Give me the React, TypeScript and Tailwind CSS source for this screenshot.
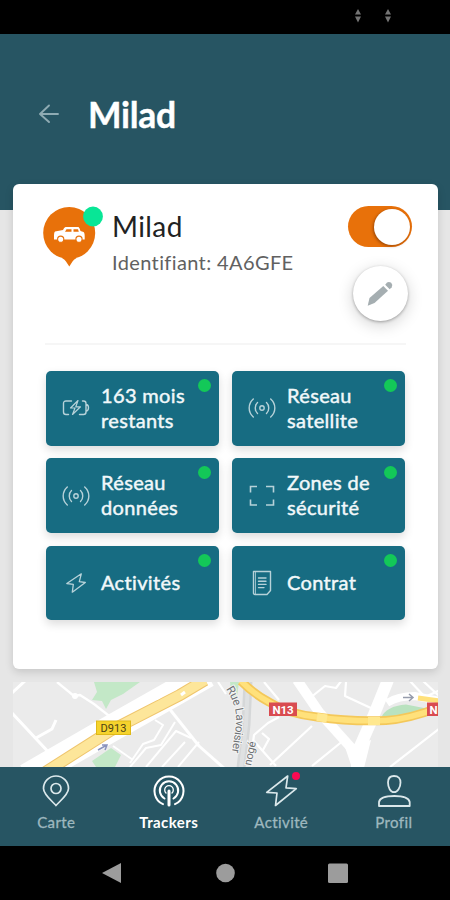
import React from "react";

type IconProps = { className?: string };

const line = {
  fill: "none",
  stroke: "currentColor",
  strokeLinecap: "round" as const,
  strokeLinejoin: "round" as const,
};

function BatteryIcon() {
  return (
    <svg width="28" height="20" viewBox="0 0 28 20" {...line} strokeWidth="1.400">
      <path d="M9.500 3H4Q1.500 3 1.500 5.500V14Q1.500 16.500 4 16.500H6.500M20.500 3H21.500Q24 3 24 5.500V14Q24 16.500 21.500 16.500H17.500M24.500 6.500Q26.500 7 26.500 9.800Q26.500 12.500 24.500 13" />
      <path d="M16 2.500L8.500 10H13L10.500 16.500L18.500 8.800H13.800Z" strokeWidth="1.200" />
    </svg>
  );
}

function SignalIcon() {
  return (
    <svg width="28" height="22" viewBox="0 0 28 22" {...line} strokeWidth="1.400">
      <circle cx="14" cy="11" r="2.200" />
      <path d="M9.500 5.500C6.500 8.300 6.500 13.700 9.500 16.500M18.500 5.500C21.500 8.300 21.500 13.700 18.500 16.500M5.300 2C-.2 7 -.2 15 5.300 20M22.700 2C28.200 7 28.200 15 22.700 20" />
    </svg>
  );
}

function ZoneIcon() {
  return (
    <svg width="28" height="22" viewBox="0 0 28 22" {...line} strokeLinecap="butt" strokeLinejoin="miter" strokeWidth="1.600">
      <path d="M2.500 7.500V1.500H9M18 1.500H25.500V7.500M25.500 14.500V20H18M9 20H2.500V14.500" />
    </svg>
  );
}

function SmallBolt() {
  return (
    <svg width="20" height="20" viewBox="0 0 20 20" {...line} strokeWidth="1.300">
      <path d="M15.300 .8L.8 10.500L7.300 11.300L6.300 19.200L19.300 9.500L13.300 8.700Z" />
    </svg>
  );
}

function ContractIcon() {
  return (
    <svg width="20" height="26" viewBox="0 0 20 26" {...line} strokeWidth="1.400">
      <path d="M1.500 1.500H18.500V20.500L15 24.500H3Q1.500 24.500 1.500 23Z" />
      <path d="M3.500 2V24" strokeWidth=".8" />
      <path d="M6.500 8H14M6.500 11.200H14M6.500 14.400H14M6.500 17.600H12" />
    </svg>
  );
}

function TrackerPin() {
  return (
    <svg width="60" height="62" viewBox="0 0 60 62">
      <circle cx="26.200" cy="27" r="26" fill="#e8710a" />
      <path d="M19 52Q22 53.500 23 55.500L26.300 60.500L29.500 55.500Q30.500 53.500 33.500 52Z" fill="#e8710a" />
      <path
        fillRule="evenodd"
        d="M12 25.500L20 24Q21 21.500 22.500 21H35.500Q36.500 21.500 37.500 25L40.500 26Q41.700 26.500 41.700 30.500V33.500H11V29Q11 26 12 25.500ZM23.500 23.300L22 25.800H28.500V23.300ZM30.500 23.300V25.800H35.800L35 23.300Z"
        fill="#fff"
      />
      <circle cx="17.700" cy="33.200" r="3.100" fill="#fff" stroke="#e8710a" strokeWidth="1.100" />
      <circle cx="36" cy="33.200" r="3.100" fill="#fff" stroke="#e8710a" strokeWidth="1.100" />
      <circle cx="50" cy="10.500" r="9.900" fill="#08e696" />
    </svg>
  );
}

function PencilIcon() {
  return (
    <svg width="26" height="26" viewBox="0 0 26 26" fill="#a5aeb1">
      <path d="M.7 24.700L2.500 17L16.300 5L21 9.700L7.500 22Z" />
      <path d="M18.200 3.700L20 1.500Q22 .2 24.200 1.800Q26 3.800 24.700 6.200L22.700 8.300Z" />
    </svg>
  );
}

function MapView() {
  return (
    <svg width="425" height="85" viewBox="13 682 425 85" className="block" fill="none">
      <rect x="13" y="682" width="425" height="85" fill="#ebebeb" />
      <path d="M94 682H140L123 694L111 700L106 709L102 701L92 700L97 692Z" fill="#c3e8c7" />
      <path d="M230 682H239L236 705L231 691Z" fill="#c3e8c7" />
      <g stroke="#fff" strokeWidth="3" strokeLinejoin="round">
        <path d="M12 693L25 681M12 713L53 757M36 738L52 729L56 720" />
        <path d="M57 682L74 696L80 695L94 704L113 719" strokeWidth="2.300" />
        <path d="M168 707L199 746L225 769" />
        <path d="M155 720L163 725L154 740L143 744L130 763M113 746L133 760M130 767L146 748L161 745L175 722M146 767L176 731L191 738M162 767L185 742M178 767L199 742" strokeWidth="2" />
        <path d="M218 682L226 694M250 765L254 735L268 723L279 717M254 741L276 766M262 733L269 739L263 750M270 765L312 726M312 766L344 740M390 767L440 728M264 682L279 700M310 698L325 686L336 688L342 680M346 682L345 696L373 709L387 698M409 680L425 697L440 690M422 680L440 697" strokeWidth="2.200" />
        <circle cx="75" cy="696" r="3" fill="#fff" stroke="none" />
      </g>
      <path d="M248 681L246 725L241 768" stroke="#d5d7d8" strokeWidth="9" />
      <path d="M248 681L246 725L241 768" stroke="#dfe1e2" strokeWidth="4" />
      <path d="M297 680L319 712L355 752" stroke="#fff" strokeWidth="10" />
      <path d="M388 680L373 717L358 751L357 768" stroke="#fff" strokeWidth="12" />
      <path d="M345 747L371 740L364 768H352Z" fill="#fff" />
      <path d="M387 703Q398 696 415 696L440 701" stroke="#fff" strokeWidth="8" />
      <path d="M381 718Q386 706 406 704.500L429 709L426 716L401 718Z" fill="#b9e2bf" />
      <path d="M27 777L105 732L172 694L207 674" stroke="#fff" strokeWidth="27" />
      <path d="M92 761L111 748L121 755L115 767H96Z" fill="#c3e8c7" />
      <path d="M44 773L110 731L180 695L205 680" stroke="#efc56d" strokeWidth="12" />
      <path d="M44 773L110 731L180 695L205 680" stroke="#fde69a" strokeWidth="10" />
      <path d="M156 699L161 696M174 689L181 685M181 695L185 692" stroke="#fff" strokeWidth="3" />
      <path d="M241 681Q254 694 269 702Q288 714 317 717Q352 722 386 720.500Q410 719 440 707" stroke="#f4c85a" strokeWidth="9" />
      <path d="M241 681Q254 694 269 702Q288 714 317 717Q352 722 386 720.500Q410 719 440 707" stroke="#ffe17b" strokeWidth="5.500" />
      <path d="M317 717L327 718.500M368 721L380 721" stroke="#ffe88f" strokeWidth="8" />
      <path d="M418 698L440 701" stroke="#ffe17b" strokeWidth="5" />
      <path d="M98 750L107 745M102 745H107L105 750" stroke="#8a93bd" strokeWidth="1.500" />
      <path d="M403 697.500H413M409 694L413 697.500L409 701" stroke="#969cac" strokeWidth="1.500" />
      <rect x="96.500" y="721" width="34" height="13.500" fill="#f5d32d" stroke="#dfb918" />
      <text x="100.500" y="732" fontSize="11" fill="#4c4216" textLength="26" className="font-['Roboto',sans-serif]">D913</text>
      <rect x="269" y="702.500" width="28" height="13.500" fill="#d94b50" />
      <text x="272.500" y="713.500" fontSize="11.500" fontWeight="700" fill="#fff" textLength="21" className="font-['Roboto',sans-serif]">N13</text>
      <rect x="427" y="702.500" width="20" height="13.500" fill="#d94b50" />
      <text x="429.500" y="713.500" fontSize="11.500" fontWeight="700" fill="#fff" className="font-['Roboto',sans-serif]">N</text>
      <defs>
        <path id="lavoisier" d="M226 689Q238 707 236 725Q234 740 231 757" />
      </defs>
      <text fontSize="11.500" fill="#6e7275" stroke="#f4f4f4" strokeWidth="2" paintOrder="stroke" className="font-['Roboto',sans-serif]">
        <textPath href="#lavoisier" textLength="66">Rue Lavoisier</textPath>
      </text>
      <text fontSize="11" fill="#6e7275" stroke="#f4f4f4" strokeWidth="2" paintOrder="stroke" transform="translate(251 766) rotate(-78)" className="font-['Roboto',sans-serif]">nogé</text>
    </svg>
  );
}

const tiles = [
  { lines: ["163 mois", "restants"], icon: <BatteryIcon /> },
  { lines: ["Réseau", "satellite"], icon: <SignalIcon /> },
  { lines: ["Réseau", "données"], icon: <SignalIcon /> },
  { lines: ["Zones de", "sécurité"], icon: <ZoneIcon /> },
  { lines: ["Activités"], icon: <SmallBolt /> },
  { lines: ["Contrat"], icon: <ContractIcon /> },
];

function MapPinIcon() {
  return (
    <svg width="34" height="34" viewBox="0 0 34 34" {...line} strokeWidth="1.700">
      <path d="M17 31.500C13 27 4.500 20.500 4.500 14.500A12.500 12.500 0 0 1 29.500 14.500C29.500 20.500 21 27 17 31.500Z" />
      <circle cx="17" cy="14.500" r="5" />
    </svg>
  );
}

function TrackersIcon() {
  return (
    <svg width="34" height="34" viewBox="0 0 34 34" {...line} strokeWidth="2">
      <path d="M11 30.200A14.500 14.500 0 1 1 23 30.200M12.500 24.500A9.200 9.200 0 1 1 21.500 24.500" />
      <path d="M14 19A4.300 4.300 0 1 1 20 19" strokeWidth="1.300" />
      <path d="M17 17V31" strokeWidth="3" />
    </svg>
  );
}

function ActivityIcon() {
  return (
    <svg width="34" height="34" viewBox="0 0 34 34" {...line} strokeWidth="1.700">
      <path d="M23.700 2L2.700 18.300L13 19L11.500 31.500L32.300 14.700L22 13.900Z" />
    </svg>
  );
}

function ProfileIcon() {
  return (
    <svg width="34" height="34" viewBox="0 0 34 34" {...line} strokeWidth="1.800">
      <path d="M17 2C13 2 11 4.500 11 8.500C11 13.500 13.500 18.200 17 18.200C20.500 18.200 23.500 13.500 23.500 8.500C23.500 4.500 21.500 2 17 2Z" />
      <path d="M2 32V28Q3 22 17.300 22Q31.500 22 32.700 28V32Z" />
    </svg>
  );
}

const tabs = [
  { label: "Carte", icon: <MapPinIcon /> },
  { label: "Trackers", icon: <TrackersIcon />, active: true },
  { label: "Activité", icon: <ActivityIcon />, badge: true },
  { label: "Profil", icon: <ProfileIcon /> },
];

function StatusMark({ className }: IconProps) {
  return (
    <svg width="6" height="14" viewBox="0 0 6 14" fill="#747474" className={className}>
      <path d="M3 0L6 5.500H0ZM0 7.500H6L3 13.500Z" />
    </svg>
  );
}

export default function App() {
  return (
    <div className="flex h-[900px] w-[450px] flex-col overflow-hidden bg-[#e6e6e6] font-['Lato','Open_Sans',sans-serif] [font-variant-ligatures:none]">
      <div className="flex h-[34px] shrink-0 justify-end gap-[24px] bg-black pt-[9px] pr-[59px]">
        <StatusMark />
        <StatusMark />
      </div>
      <header className="flex h-[176px] shrink-0 items-start bg-[#275563] pt-[57px] pl-[38px]">
        <svg width="21" height="20" viewBox="0 0 21 20" {...line} strokeWidth="1.900" className="mt-[13px] text-[#8fabb3]">
          <path d="M11 1.500L2 10L11 18M2 10H20" />
        </svg>
        <h1 className="ml-[29px] text-[35.500px] leading-[47px] font-bold tracking-[-0.3px] text-white [-webkit-text-stroke:0.4px_white]">Milad</h1>
      </header>

      <main className="-mt-[26px] flex h-[583px] shrink-0 flex-col px-[13px]">
        <section className="h-[485px] w-[425px] shrink-0 rounded-[6px] bg-white shadow-[0_3px_9px_rgba(0,0,0,0.14)]">
          <div className="mx-[32px] flex h-[161px] border-b-2 border-[#f6f6f6]">
            <div className="-ml-[2px] w-[69px] shrink-0 pt-[22px]">
              <TrackerPin />
            </div>
            <div className="w-[210px] shrink-0 pt-[25px]">
              <div className="text-[28px] leading-[34px] tracking-[0.4px] text-[#222]">Milad</div>
              <div className="mt-[8px] text-[20px] leading-[22px] tracking-[0.38px] whitespace-nowrap text-[#616161]">Identifiant: 4A6GFE</div>
            </div>
            <div className="ml-[26px] flex w-[64px] shrink-0 flex-col items-center pt-[22px]">
              <div className="flex h-[41px] w-[64px] shrink-0 items-center justify-end rounded-full bg-[#e8710a] pr-[2px]">
                <div className="size-[36px] rounded-full bg-white shadow-[-1px_1px_3px_rgba(80,30,0,0.5)]" />
              </div>
              <div className="mt-[19px] flex size-[55px] shrink-0 items-center justify-center rounded-full bg-white shadow-[0_1px_3px_rgba(0,0,0,0.3),0_4px_16px_rgba(0,0,0,0.18)]">
                <PencilIcon />
              </div>
            </div>
          </div>
          <div className="mx-[33px] mt-[26px] grid grid-cols-[173px_173px] gap-x-[13px] gap-y-[12.800px]">
            {tiles.map((tile, i) => (
              <div key={i} className="relative flex h-[74.500px] items-center rounded-[5px] bg-[#176c82] text-white shadow-[0_4px_10px_rgba(0,0,0,0.14)]">
                <div className="ml-[14px] flex w-[31px] shrink-0 justify-center text-[#b7d2d9]">{tile.icon}</div>
                <div className="mb-[1px] ml-[10px] text-[20px] leading-[25px] tracking-[0.35px] whitespace-nowrap text-[#f1f8fa] [-webkit-text-stroke:0.45px_#f1f8fa]">
                  {tile.lines.map((text) => (
                    <div key={text}>{text}</div>
                  ))}
                </div>
                <span className="absolute top-[8px] right-[8px] size-[13px] rounded-full bg-[#13c858]" />
              </div>
            ))}
          </div>
        </section>
        <div className="mt-[13px]">
          <MapView />
        </div>
      </main>

      <nav className="grid h-[79px] shrink-0 grid-cols-4 bg-[#275563]">
        {tabs.map((tab) => (
          <div key={tab.label} className={tab.active ? "flex flex-col items-center pt-[7px] text-white" : "flex flex-col items-center pt-[7px] text-[#dbe8eb]"}>
            <div className="relative">
              {tab.icon}
              {tab.badge && <span className="absolute -top-[2px] right-[-2px] size-[8px] rounded-full bg-[#fb0b52]" />}
            </div>
            <div className={tab.active ? "mt-[5px] text-[15px] leading-[18px] font-bold tracking-[0.4px]" : "mt-[5px] text-[15px] leading-[18px] tracking-[0.4px] text-[#9eb8bf] [-webkit-text-stroke:0.3px_#9eb8bf]"}>{tab.label}</div>
          </div>
        ))}
      </nav>

      <div className="h-[54px] shrink-0 bg-black">
        <svg width="450" height="54" viewBox="0 846 450 54" fill="#9c9c9c">
          <path d="M102 873L121 863V883Z" />
          <circle cx="225.500" cy="873" r="9.300" />
          <rect x="328" y="863.500" width="20" height="19.500" rx="1.500" />
        </svg>
      </div>
    </div>
  );
}
